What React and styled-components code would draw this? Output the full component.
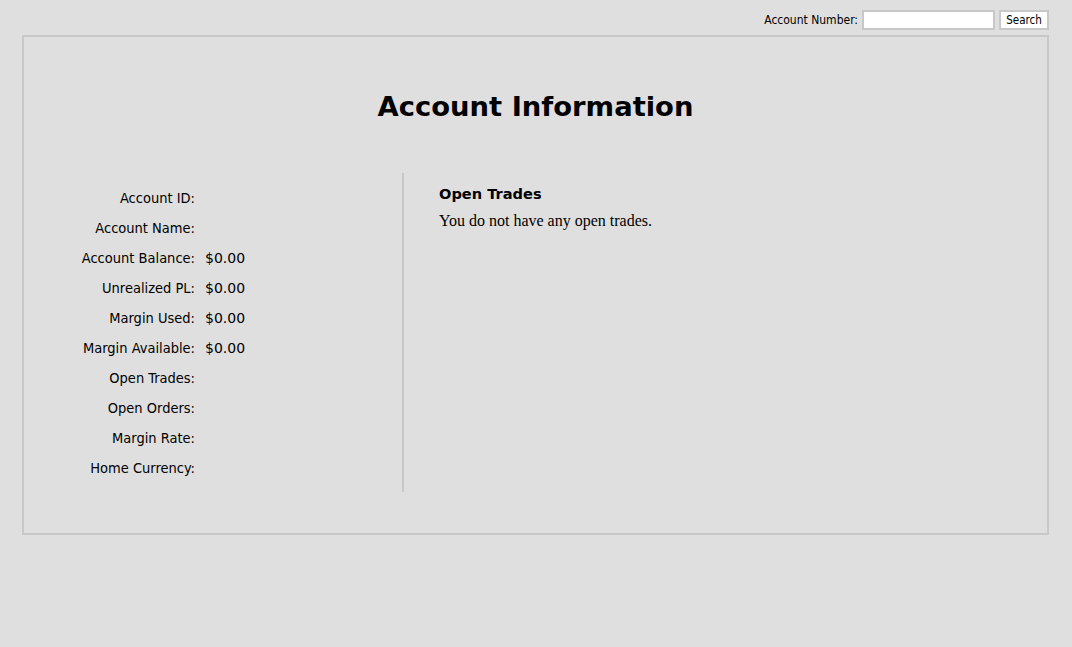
import React from "react";
import styled, { createGlobalStyle } from "styled-components";

const Global = createGlobalStyle`
  html, body { margin: 0; padding: 0; background: #dfdfdf; }
  body { font-family: "DejaVu Sans Condensed", "DejaVu Sans", sans-serif; color: #000; }
`;

const Page = styled.div`
  padding: 0 23px 0 22px;
`;

const TopBar = styled.form`
  height: 35px;
  display: flex;
  justify-content: flex-end;
  align-items: flex-start;
  padding-top: 10px;
  box-sizing: border-box;
  gap: 4px;
`;

const SearchLabel = styled.label`
  font-size: 12px;
  line-height: 20px;
`;

const SearchInput = styled.input`
  width: 133px;
  height: 20px;
  box-sizing: border-box;
  border: 2px solid #c8c8c8;
  background: #fff;
  padding: 0 3px;
  margin: 0;
  outline: none;
`;

const SearchButton = styled.button`
  height: 20px;
  width: 50px;
  box-sizing: border-box;
  border: 2px solid #c8c8c8;
  background: #fff;
  font-family: "DejaVu Sans Condensed", "DejaVu Sans", sans-serif;
  font-size: 11.5px;
  padding: 0;
  margin: 0;
  color: #000;
`;

const Panel = styled.div`
  border: 2px solid #c8c8c8;
  height: 500px;
  box-sizing: border-box;
`;

const Title = styled.h1`
  margin: 0;
  padding-top: 50px;
  height: 136px;
  box-sizing: border-box;
  text-align: center;
  font-family: "DejaVu Sans", sans-serif;
  font-weight: bold;
  font-size: 27.4px;
  line-height: 40px;
`;

const Columns = styled.div`
  display: flex;
  height: 319px;
`;

const Details = styled.dl`
  width: 378px;
  margin: 0;
  padding-top: 14px;
  display: grid;
  grid-template-columns: 171px 1fr;
  grid-auto-rows: 30px;
  column-gap: 10px;
  align-content: start;
`;

const Label = styled.dt`
  text-align: right;
  line-height: 22px;
  font-size: 14.5px;
`;

const Value = styled.dd`
  margin: 0;
  line-height: 22px;
  font-family: "DejaVu Sans", sans-serif;
  font-size: 14px;
`;

const Trades = styled.div`
  border-left: 2px solid #c8c8c8;
  padding-left: 35px;
  padding-top: 11px;
  flex: 1;
`;

const TradesTitle = styled.h3`
  margin: 0;
  font-family: "DejaVu Sans", sans-serif;
  font-weight: bold;
  font-size: 14.6px;
  line-height: 20px;
`;

const TradesText = styled.p`
  margin: 7px 0 0;
  font-family: "Liberation Serif", serif;
  font-size: 16px;
  line-height: 20px;
`;

const rows = [
  ["Account ID:", ""],
  ["Account Name:", ""],
  ["Account Balance:", "$0.00"],
  ["Unrealized PL:", "$0.00"],
  ["Margin Used:", "$0.00"],
  ["Margin Available:", "$0.00"],
  ["Open Trades:", ""],
  ["Open Orders:", ""],
  ["Margin Rate:", ""],
  ["Home Currency:", ""],
];

export default function App() {
  return (
    <>
      <Global />
      <Page>
        <TopBar onSubmit={(e) => e.preventDefault()}>
          <SearchLabel htmlFor="acct">Account Number:</SearchLabel>
          <SearchInput id="acct" type="text" />
          <SearchButton type="submit">Search</SearchButton>
        </TopBar>
        <Panel>
          <Title>Account Information</Title>
          <Columns>
            <Details>
              {rows.map(([l, v]) => (
                <React.Fragment key={l}>
                  <Label>{l}</Label>
                  <Value>{v}</Value>
                </React.Fragment>
              ))}
            </Details>
            <Trades>
              <TradesTitle>Open Trades</TradesTitle>
              <TradesText>You do not have any open trades.</TradesText>
            </Trades>
          </Columns>
        </Panel>
      </Page>
    </>
  );
}
